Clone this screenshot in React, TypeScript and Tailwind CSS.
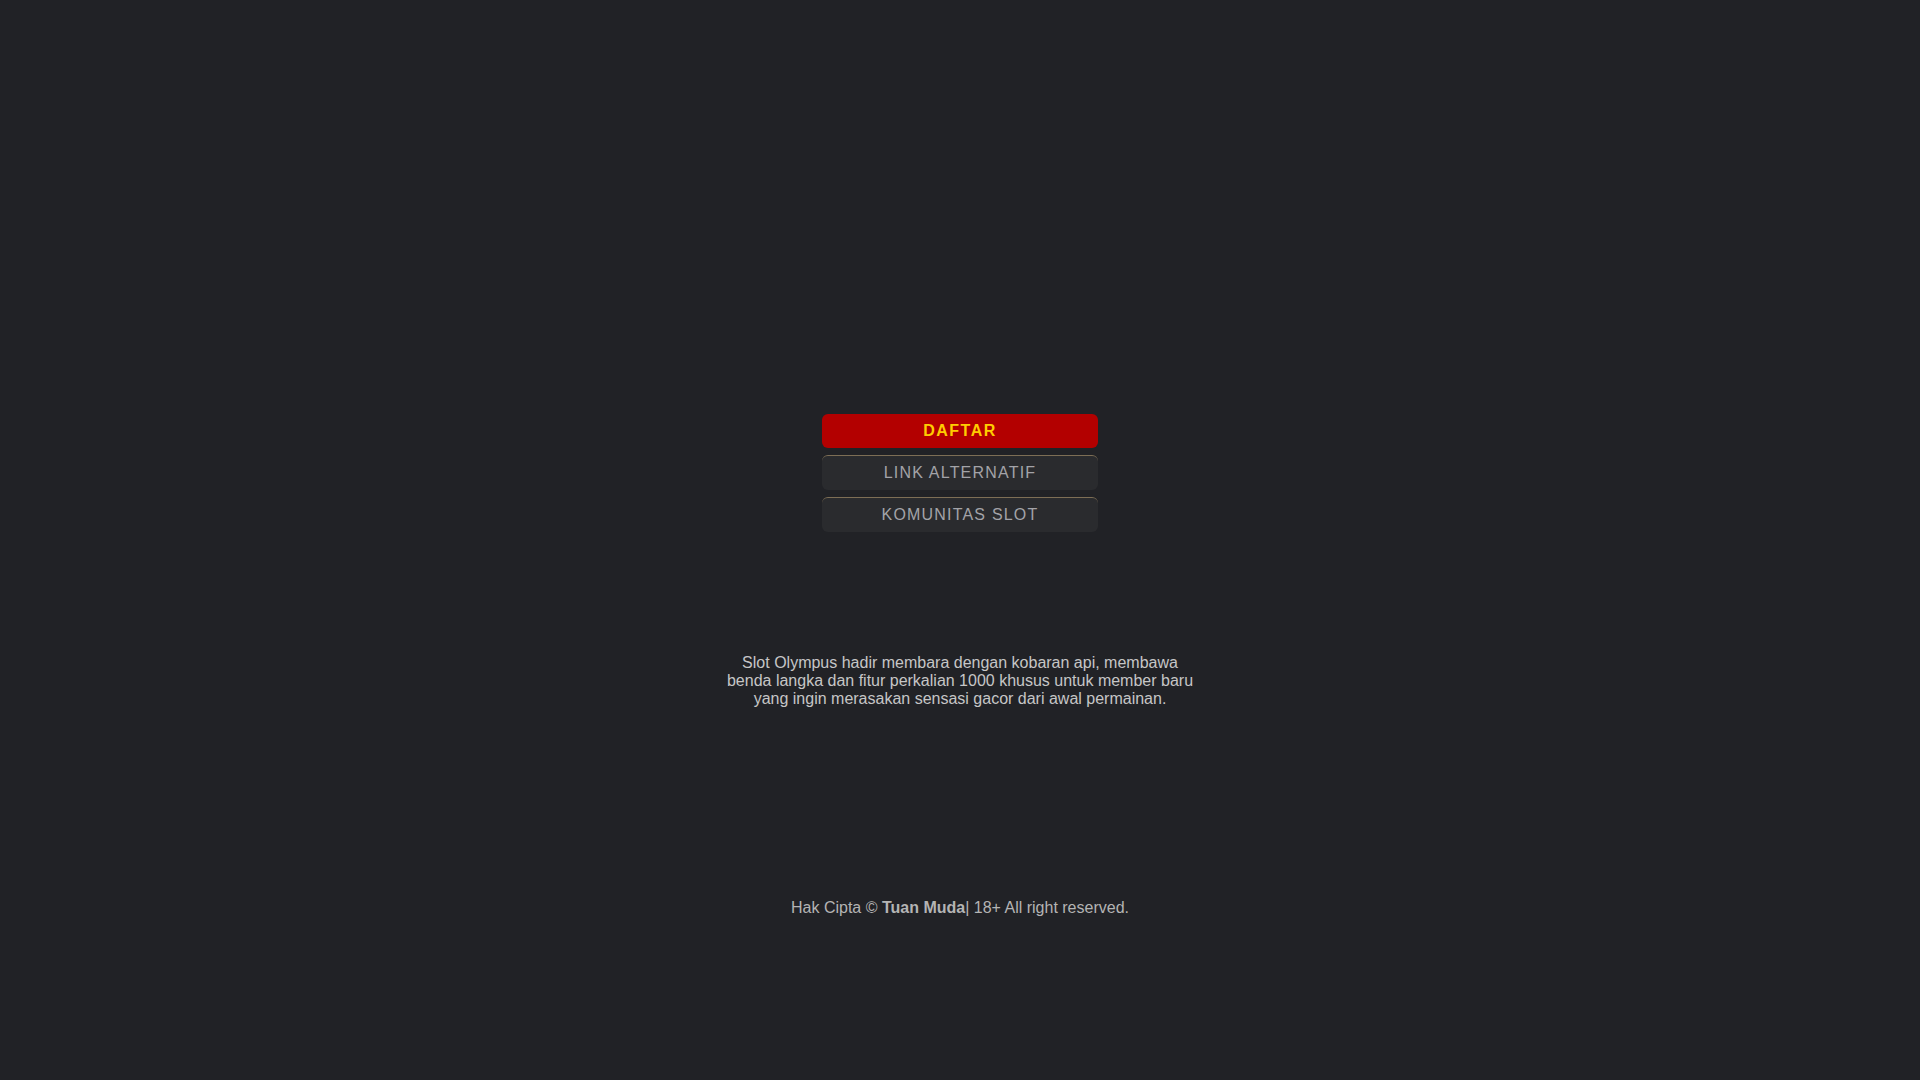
import React from 'react';

const links = [
    { label: 'DAFTAR', primary: true },
    { label: 'LINK ALTERNATIF', primary: false },
    { label: 'KOMUNITAS SLOT', primary: false },
];

const App: React.FC = () => {
    return (
        <div className="min-h-screen bg-[#212226] font-['Liberation_Sans',Arial,sans-serif] flex flex-col items-center">
            {/* buttons */}
            <div className="mt-[414px] w-[276px] flex flex-col gap-[7px]">
                {links.map((l) => (
                    <a
                        key={l.label}
                        href="#"
                        className={
                            l.primary
                                ? 'h-[34px] flex items-center justify-center rounded-[6px] bg-[#b30000] text-[#ffcc00] text-[16px] font-bold tracking-[1.5px]'
                                : 'h-[35px] flex items-center justify-center rounded-[6px] bg-[#2a2b2e] border-t border-[#7d6e55] text-[#a3a3a8] text-[16px] tracking-[1.2px]'
                        }
                    >
                        {l.label}
                    </a>
                ))}
            </div>

            {/* description */}
            <p className="mt-[122px] w-[480px] text-center text-[16px] leading-[18px] text-[#c6c6c6]">
                Slot Olympus hadir membara dengan kobaran api, membawa benda langka dan fitur perkalian 1000 khusus untuk member baru yang ingin merasakan sensasi gacor dari awal permainan.
            </p>

            {/* footer */}
            <p className="mt-[191px] text-[16px] leading-[18px] text-[#b4b4b4]">
                Hak Cipta © <b className="font-bold">Tuan Muda</b>| 18+ All right reserved.
            </p>
        </div>
    );
};

export default App;
